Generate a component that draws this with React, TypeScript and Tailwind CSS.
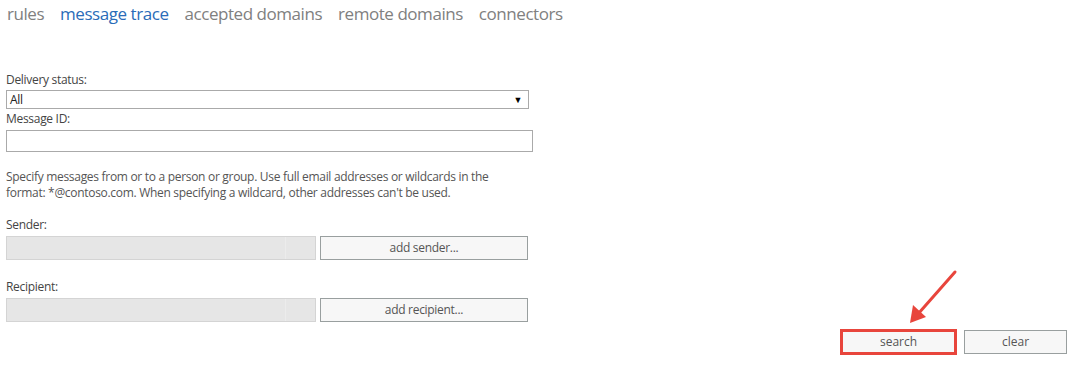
import React from "react";

const font = { fontFamily: '"Open Sans", "Noto Sans", sans-serif' };

export default function App() {
  return (
    <div className="relative w-[1072px] h-[378px] bg-white text-[#444]" style={font}>
      <nav className="flex gap-[16px] pl-[7px] pt-[1px] text-[17px] leading-[26px] text-[#808080] tracking-[-0.45px]">
        <span>rules</span>
        <span className="text-[#2a6cb8]">message trace</span>
        <span>accepted domains</span>
        <span>remote domains</span>
        <span>connectors</span>
      </nav>

      <div className="pl-[6px] w-[540px] text-[12px] leading-[14px] tracking-[-0.3px]">
        <div className="mt-[46px] h-[14px] text-[#444]">Delivery status:</div>
        <div className="mt-[3px] flex h-[19px] w-[523px] items-center justify-between border border-[#aaaaaa] bg-white pl-[3px] pr-[6px] text-[#222]">
          <span>All</span>
          <span className="text-[9px] text-black">▼</span>
        </div>
        <div className="mt-[3px] h-[14px]">Message ID:</div>
        <div className="mt-[4px] h-[22px] w-[527px] border border-[#aaaaaa] bg-white" />

        <p className="mt-[17px] w-[520px] leading-[16px] text-[#555]">
          Specify messages from or to a person or group. Use full email addresses or wildcards in the format: *@contoso.com. When specifying a wildcard, other addresses can't be used.
        </p>

        <div className="mt-[17px] h-[14px]">Sender:</div>
        <div className="mt-[4px] flex gap-[4px]">
          <div className="relative h-[24px] w-[310px] border border-[#d4d4d4] bg-[#e6e6e6]">
            <div className="absolute left-[278px] top-0 h-full w-px bg-[#ececec]" />
          </div>
          <button className="h-[24px] w-[208px] border border-[#999f9f] bg-[#f7f7f7] text-[12px] text-[#555]">add sender...</button>
        </div>

        <div className="mt-[20px] h-[14px]">Recipient:</div>
        <div className="mt-[4px] flex gap-[4px]">
          <div className="relative h-[24px] w-[310px] border border-[#d4d4d4] bg-[#e6e6e6]">
            <div className="absolute left-[278px] top-0 h-full w-px bg-[#ececec]" />
          </div>
          <button className="h-[24px] w-[208px] border border-[#999f9f] bg-[#f7f7f7] text-[12px] text-[#555]">add recipient...</button>
        </div>
      </div>

      <div className="mt-[7px] flex justify-end gap-[7px] pr-[5px] text-[12px]">
        <button className="h-[26px] w-[117px] border-[3px] border-[#e8453c] bg-[#f7f7f7] text-[#555]">search</button>
        <button className="mt-[1px] h-[24px] w-[103px] border border-[#999f9f] bg-[#f7f7f7] text-[#555]">clear</button>
      </div>

      <svg className="pointer-events-none absolute left-0 top-0" width="1072" height="378">
        <line x1="955" y1="272" x2="918" y2="314" stroke="#e8453c" strokeWidth="3" strokeLinecap="round" />
        <polygon points="910,323 913,305 926,317" fill="#e8453c" />
      </svg>
    </div>
  );
}
